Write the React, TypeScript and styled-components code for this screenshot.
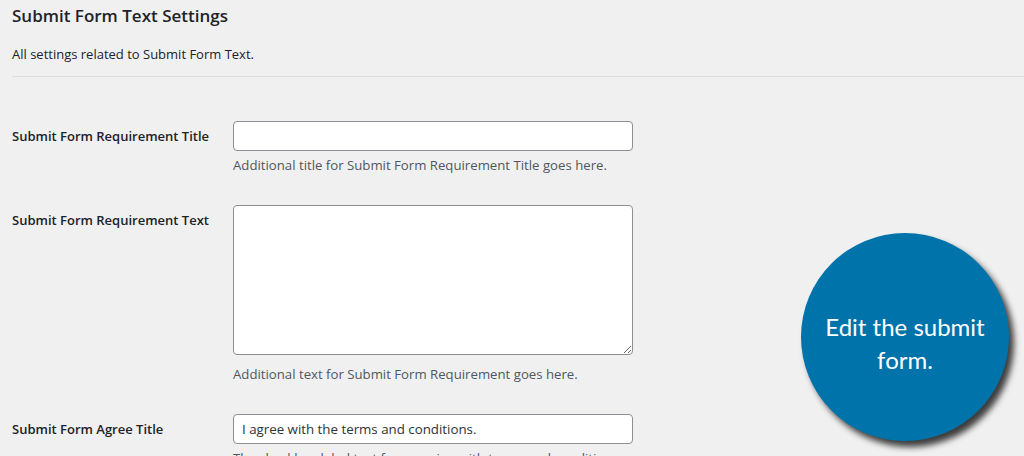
import styled, { createGlobalStyle } from 'styled-components';

const GlobalStyle = createGlobalStyle`
  html, body {
    margin: 0;
    padding: 0;
    background: #f0f0f1;
    font-family: "Open Sans", "Noto Sans", sans-serif;
    color: #1d2327;
  }
  #root {
    height: 456px;
    overflow: hidden;
  }
`;

type Field = {
  label: string;
  kind: 'input' | 'textarea';
  value?: string;
  help: string;
};

const fields: Field[] = [
  {
    label: 'Submit Form Requirement Title',
    kind: 'input',
    help: 'Additional title for Submit Form Requirement Title goes here.',
  },
  {
    label: 'Submit Form Requirement Text',
    kind: 'textarea',
    help: 'Additional text for Submit Form Requirement goes here.',
  },
  {
    label: 'Submit Form Agree Title',
    kind: 'input',
    value: 'I agree with the terms and conditions.',
    help: 'The checkbox label text for agreeing with terms and conditions.',
  },
];

const App = () => {
  return (
    <Page>
      <GlobalStyle />
      <Heading>Submit Form Text Settings</Heading>
      <Intro>All settings related to Submit Form Text.</Intro>
      <Divider />

      <FormTable>
        {fields.map((f) => (
          <Row key={f.label}>
            <Label>{f.label}</Label>
            <FieldCell>
              {f.kind === 'input' ? (
                <TextInput type="text" defaultValue={f.value ?? ''} />
              ) : (
                <TextArea />
              )}
              <Help>{f.help}</Help>
            </FieldCell>
          </Row>
        ))}
      </FormTable>

      <Callout>
        <CalloutText>
          Edit the submit
          <br />
          form.
        </CalloutText>
      </Callout>
    </Page>
  );
};

const Page = styled.div`
  position: relative;
  padding-left: 12px;
  height: 456px;
  overflow: hidden;
`;

const Heading = styled.h2`
  margin: 5px 0 0;
  font-size: 17px;
  font-weight: 600;
  line-height: 22px;
  color: #1d2327;
`;

const Intro = styled.p`
  margin: 17px 0 0;
  font-size: 13px;
  line-height: 20px;
  color: #1d2327;
`;

const Divider = styled.div`
  height: 1px;
  margin-top: 12px;
  background: #dcdcde;
`;

const FormTable = styled.div`
  display: flex;
  flex-direction: column;
  margin-top: 29px;
`;

const Row = styled.div`
  display: grid;
  grid-template-columns: 221px 400px;
  padding: 15px 0;
`;

const Label = styled.div`
  font-size: 13px;
  font-weight: 600;
  line-height: 30px;
  color: #1d2327;
`;

const FieldCell = styled.div`
  display: flex;
  flex-direction: column;
`;

const TextInput = styled.input`
  box-sizing: border-box;
  width: 400px;
  height: 30px;
  padding: 0 8px;
  border: 1px solid #8c8f94;
  border-radius: 4px;
  background: #fff;
  font-family: "Open Sans", "Noto Sans", sans-serif;
  font-size: 13.3px;
  color: #2c3338;
  outline: none;
`;

const TextArea = styled.textarea`
  box-sizing: border-box;
  width: 400px;
  height: 150px;
  margin-bottom: 5px;
  padding: 4px 8px;
  border: 1px solid #8c8f94;
  border-radius: 4px;
  background: #fff;
  font-family: "Open Sans", "Noto Sans", sans-serif;
  font-size: 13px;
  outline: none;
`;

const Help = styled.p`
  margin: 4px 0 0;
  font-size: 13.2px;
  line-height: 20px;
  color: #50575e;
`;

const Callout = styled.div`
  position: absolute;
  left: 801px;
  top: 233px;
  width: 208px;
  height: 208px;
  border-radius: 50%;
  background: #0073aa;
  box-shadow: 5px 6px 6px rgba(0, 0, 0, 0.75);
  display: flex;
  align-items: center;
  justify-content: center;
`;

const CalloutText = styled.div`
  margin-top: 11px;
  font-family: Lato, "Open Sans", sans-serif;
  font-size: 24px;
  line-height: 33px;
  color: #fff;
  text-align: center;
`;

export default App;
